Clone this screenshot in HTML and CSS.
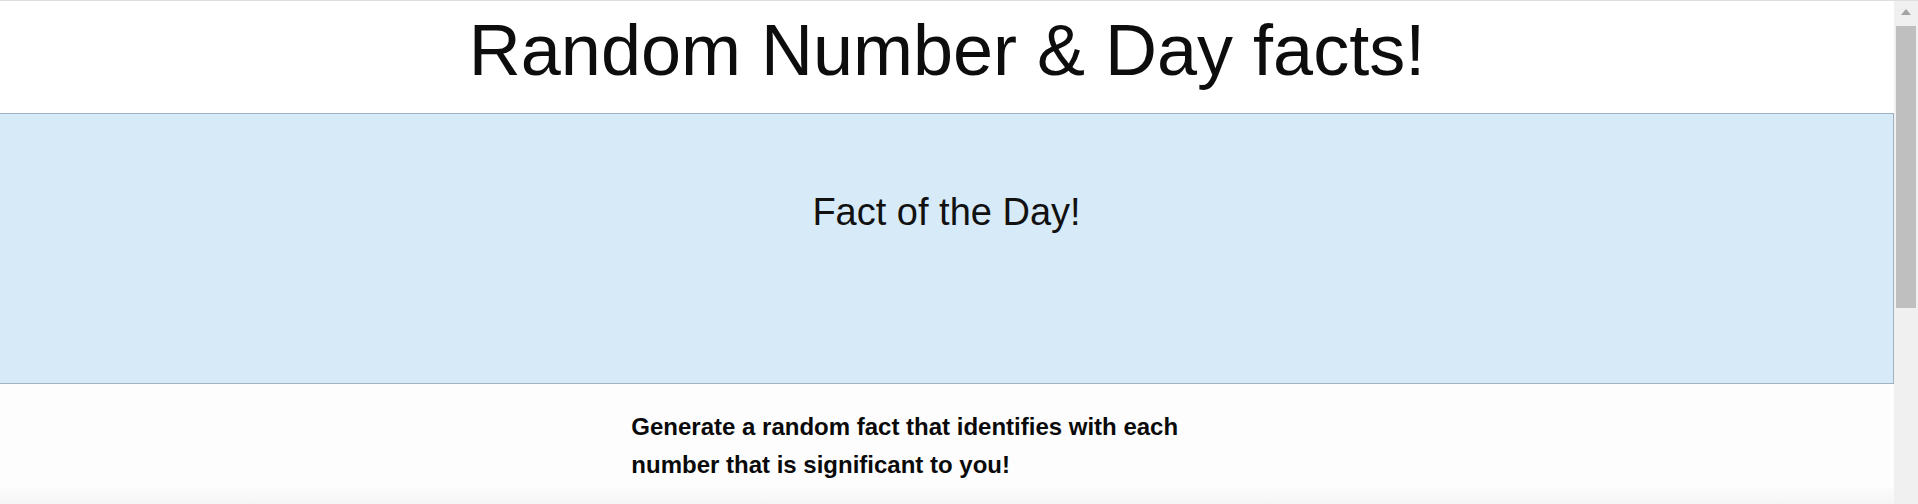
FILE: index.html
```html
<!DOCTYPE html>
<html lang="en">
<head>
<meta charset="utf-8">
<title>Random Number &amp; Day facts!</title>
<link rel="stylesheet" href="styles.css">
</head>
<body>
  <div class="page">
    <header class="page-header">
      <h1 class="page-title">Random Number &amp; Day facts!</h1>
    </header>
    <section class="day-fact">
      <h2 class="day-fact-title">Fact of the Day!</h2>
      <p class="day-fact-text"></p>
    </section>
    <main class="columns">
      <div class="col"></div>
      <div class="col">
        <p class="intro">Generate a random fact that identifies with each number that is significant to you!</p>
      </div>
      <div class="col"></div>
    </main>
  </div>
  <div class="scrollbar" aria-hidden="true">
    <div class="scroll-up">
      <svg width="10" height="6" viewBox="0 0 10 6"><path d="M5 0 L10 6 L0 6 Z" fill="#a3a3a3"/></svg>
    </div>
    <div class="scroll-thumb"></div>
  </div>
</body>
</html>
```

FILE: styles.css
```css
html {
  background: #ffffff;
}

body {
  margin: 0;
  height: 503px;
  overflow: hidden;
  display: flex;
  border-top: 1px solid #dedede;
  font-family: "Liberation Sans", Arial, sans-serif;
  color: #111111;
  background: #ffffff;
}

.page {
  flex: 1;
  min-width: 0;
  display: flex;
  flex-direction: column;
}

.page-header {
  padding: 8px 0 22px;
}

.page-title {
  margin: 0;
  font-size: 72px;
  line-height: 82px;
  font-weight: normal;
  text-align: center;
  color: #0d0d0d;
}

.day-fact {
  box-sizing: border-box;
  width: 100%;
  background: #d6eaf8;
  border: 1px solid #9fb2c1;
  border-left: none;
  padding: 76px 0 0;
  height: 271px;
  flex: none;
}

.day-fact-title {
  margin: 0;
  font-size: 38px;
  line-height: 44px;
  font-weight: normal;
  text-align: center;
  color: #111111;
}

.day-fact-text {
  margin: 0;
}

.columns {
  flex: 1;
  display: grid;
  grid-template-columns: 1fr 1fr 1fr;
  align-content: start;
  padding: 24px 0 0;
  background: linear-gradient(to bottom, #fdfdfd 0, #fdfdfd 84%, #f5f5f5 100%);
}

.intro {
  margin: 0;
  font-size: 24px;
  line-height: 38px;
  font-weight: bold;
  color: #0a0a0a;
}

.scrollbar {
  width: 24px;
  flex: none;
  background: #f0f0f0;
  display: flex;
  flex-direction: column;
}

.scroll-up {
  height: 24px;
  display: flex;
  align-items: center;
  justify-content: center;
  padding-bottom: 2px;
  box-sizing: border-box;
}

.scroll-up svg {
  display: block;
}

.scroll-thumb {
  height: 282px;
  margin: 1px 2px 0;
  background: #bfbfbf;
}
```
